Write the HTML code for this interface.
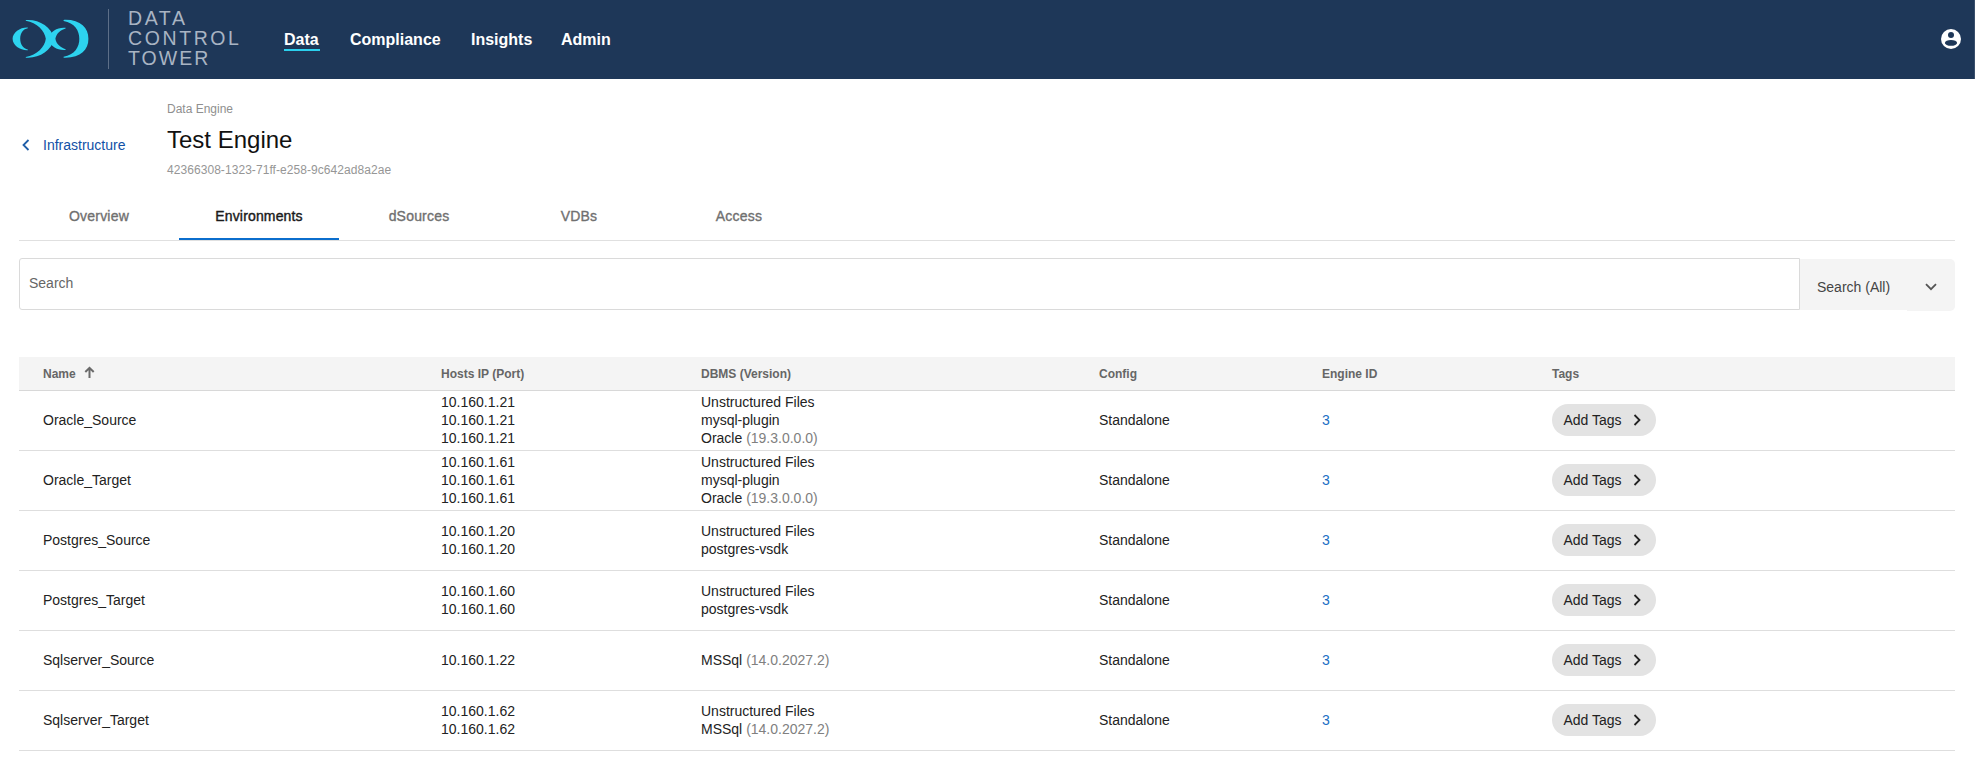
<!DOCTYPE html>
<html><head><meta charset="utf-8">
<style>
*{margin:0;padding:0;box-sizing:border-box}
html,body{width:1975px;height:764px;overflow:hidden;background:#fff;font-family:"Liberation Sans",sans-serif;color:#222}
.abs{position:absolute;white-space:nowrap}
#hdr{position:absolute;left:0;top:0;width:1975px;height:79px;background:#1e3758}
#logo{position:absolute;left:0;top:0}
#divl{position:absolute;left:108px;top:9px;width:1px;height:60px;background:#5d6f88}
.brand{position:absolute;left:128px;font-size:19.5px;letter-spacing:2.6px;color:#a9b4c3;line-height:20px}
.nav{position:absolute;top:30px;font-size:16px;font-weight:bold;color:#fff;line-height:20px}
#navul{position:absolute;left:284px;top:49px;width:36px;height:2px;background:#2bd0ee}
#user{position:absolute;left:1941px;top:29px}
.crumb{position:absolute;left:167px;top:102px;font-size:12px;color:#8f8f8f}
.title{position:absolute;left:167px;top:126px;font-size:24px;color:#111}
.uid{position:absolute;left:167px;top:163px;font-size:12px;color:#969696;letter-spacing:0.06px}
.back{position:absolute;left:43px;top:137px;font-size:14px;color:#1150a6}
.tab{position:absolute;top:208px;width:160px;text-align:center;font-size:14px;color:#707070;-webkit-text-stroke:0.35px #707070;letter-spacing:0.2px}
.tab.act{color:#1a1a1a;-webkit-text-stroke:0.4px #1a1a1a;letter-spacing:0.15px}
#tabline{position:absolute;left:19px;top:240px;width:1936px;height:1px;background:#e0e0e0}
#tabul{position:absolute;left:179px;top:238px;width:160px;height:2px;background:#0b6ecd}
#search{position:absolute;left:19px;top:258px;width:1781px;height:52px;border:1px solid #dadada;border-radius:3px 0 0 3px}
#search span{position:absolute;left:9px;top:16px;font-size:14px;color:#666}
#dd{position:absolute;left:1800px;top:259px;width:155px;height:51px;background:#f4f4f4;border-radius:0 5px 5px 0}
#dd span{position:absolute;left:17px;top:19.5px;font-size:14px;color:#444}
#thead{position:absolute;left:19px;top:357px;width:1936px;height:34px;background:#f4f4f4;border-bottom:1px solid #d8d8d8}
.th{position:absolute;top:367px;font-size:12px;font-weight:bold;color:#666}
.row{position:absolute;left:19px;width:1936px;height:60px;border-bottom:1px solid #dedede}
.td{position:absolute;top:-1px;height:59px;display:flex;align-items:center;font-size:14px;color:#222;line-height:18px}
.gr{color:#808080}
.eid{color:#1a6fc4}
.btn{position:absolute;left:1533px;width:104px;height:32px;border-radius:16px;background:#e3e3e3}
.btn span{position:absolute;left:11.5px;top:8px;font-size:14px;color:#222}
.btn svg{position:absolute;left:81px;top:9.5px}
</style></head><body>
<div id="hdr">
  <svg id="logo" width="100" height="79" viewBox="0 0 100 79">
    <g fill="#2dd3ef">
      <path d="M27.8,27.4 C20.5,27.0 12.6,32.0 12.6,38.85 C12.6,45.7 20.5,50.7 27.8,50.3 L27.8,49.4 C23.5,48.7 20.2,44.7 20.2,38.85 C20.2,33 23.5,29.0 27.8,28.3 Z"/>
      <path d="M25.8,20.0 C39,19.0 51,26.5 54.5,38.85 C51,51.2 39,58.7 25.8,57.7 L25.8,57.0 C37.0,55.4 45.0,46.7 45.8,38.85 C45.0,31.0 37.0,22.3 25.8,20.7 Z"/>
      <path d="M65.6,27.8 C57.5,27.2 51,30.5 48,38.85 C51,47.2 57.5,50.5 65.6,49.9 L65.6,49.2 C60.5,47.7 56.3,44.2 55.4,38.85 C56.3,33.5 60.5,30.0 65.6,28.5 Z"/>
      <path d="M63.6,19.9 C80,19.2 88.6,27.5 88.4,38.85 C88.6,50.2 80,58.5 63.6,57.8 L63.6,56.8 C74.5,54.9 79.5,47.2 79.3,38.85 C79.5,30.5 74.5,22.8 63.6,20.9 Z"/>
    </g>
  </svg>
  <div id="divl"></div>
  <div style="position:absolute;left:1974px;top:0;width:1px;height:79px;background:#3a4f6c"></div>
  <div class="brand" style="top:8px">DATA</div>
  <div class="brand" style="top:28px">CONTROL</div>
  <div class="brand" style="top:48px;letter-spacing:2.05px">TOWER</div>
  <div class="nav" style="left:284px">Data</div>
  <div class="nav" style="left:350px">Compliance</div>
  <div class="nav" style="left:471px">Insights</div>
  <div class="nav" style="left:561px">Admin</div>
  <div id="navul"></div>
  <svg id="user" width="20" height="20" viewBox="0 0 20 20">
    <circle cx="10" cy="10" r="10" fill="#fff"/>
    <circle cx="10" cy="6.0" r="3.0" fill="#1e3758"/>
    <ellipse cx="10" cy="13.9" rx="6.1" ry="2.9" fill="#1e3758"/>
  </svg>
</div>

<div class="crumb">Data Engine</div>
<div class="title">Test Engine</div>
<div class="uid">42366308-1323-71ff-e258-9c642ad8a2ae</div>
<svg class="abs" style="left:21px;top:139px" width="10" height="12" viewBox="0 0 10 12"><path d="M7.5,1 L2.5,6 L7.5,11" fill="none" stroke="#1f5ea8" stroke-width="1.8"/></svg>
<div class="back">Infrastructure</div>

<div class="tab" style="left:19px">Overview</div>
<div class="tab act" style="left:179px">Environments</div>
<div class="tab" style="left:339px">dSources</div>
<div class="tab" style="left:499px">VDBs</div>
<div class="tab" style="left:659px">Access</div>
<div id="tabline"></div>
<div id="tabul"></div>

<div id="search"><span>Search</span></div>
<div id="dd2" style="position:absolute;left:1907px;top:300px;width:48px;height:11px;background:#f4f4f4;border-radius:0 0 5px 0"></div><div id="dd"><span>Search (All)</span>
  <svg style="position:absolute;left:125px;top:24px" width="12" height="8" viewBox="0 0 12 8"><path d="M1,1.2 L6,6.2 L11,1.2" fill="none" stroke="#555" stroke-width="1.8"/></svg>
</div>

<div id="thead"></div>
<div class="th" style="left:43px">Name</div>
<svg class="abs" style="left:83.5px;top:366px" width="11" height="13" viewBox="0 0 11 13"><path d="M5.5,12 V2.2 M1.3,6 L5.5,1.8 L9.7,6" fill="none" stroke="#6a6a6a" stroke-width="2"/></svg>
<div class="th" style="left:441px">Hosts IP (Port)</div>
<div class="th" style="left:701px">DBMS (Version)</div>
<div class="th" style="left:1099px">Config</div>
<div class="th" style="left:1322px">Engine ID</div>
<div class="th" style="left:1552px">Tags</div>

<div id="rows">
<div class="row" style="top:391px">
 <div class="td" style="left:24px"><div>Oracle_Source</div></div>
 <div class="td" style="left:422px"><div>10.160.1.21<br>10.160.1.21<br>10.160.1.21</div></div>
 <div class="td" style="left:682px"><div>Unstructured Files<br>mysql-plugin<br>Oracle <span class=gr>(19.3.0.0.0)</span></div></div>
 <div class="td" style="left:1080px"><div>Standalone</div></div>
 <div class="td eid" style="left:1303px"><div>3</div></div>
 <div class="btn" style="top:13px"><span>Add Tags</span><svg width="8" height="12" viewBox="0 0 8 12"><path d="M1.5,1 L6.5,6 L1.5,11" fill="none" stroke="#222" stroke-width="1.8"/></svg></div>
</div>
<div class="row" style="top:451px">
 <div class="td" style="left:24px"><div>Oracle_Target</div></div>
 <div class="td" style="left:422px"><div>10.160.1.61<br>10.160.1.61<br>10.160.1.61</div></div>
 <div class="td" style="left:682px"><div>Unstructured Files<br>mysql-plugin<br>Oracle <span class=gr>(19.3.0.0.0)</span></div></div>
 <div class="td" style="left:1080px"><div>Standalone</div></div>
 <div class="td eid" style="left:1303px"><div>3</div></div>
 <div class="btn" style="top:13px"><span>Add Tags</span><svg width="8" height="12" viewBox="0 0 8 12"><path d="M1.5,1 L6.5,6 L1.5,11" fill="none" stroke="#222" stroke-width="1.8"/></svg></div>
</div>
<div class="row" style="top:511px">
 <div class="td" style="left:24px"><div>Postgres_Source</div></div>
 <div class="td" style="left:422px"><div>10.160.1.20<br>10.160.1.20</div></div>
 <div class="td" style="left:682px"><div>Unstructured Files<br>postgres-vsdk</div></div>
 <div class="td" style="left:1080px"><div>Standalone</div></div>
 <div class="td eid" style="left:1303px"><div>3</div></div>
 <div class="btn" style="top:13px"><span>Add Tags</span><svg width="8" height="12" viewBox="0 0 8 12"><path d="M1.5,1 L6.5,6 L1.5,11" fill="none" stroke="#222" stroke-width="1.8"/></svg></div>
</div>
<div class="row" style="top:571px">
 <div class="td" style="left:24px"><div>Postgres_Target</div></div>
 <div class="td" style="left:422px"><div>10.160.1.60<br>10.160.1.60</div></div>
 <div class="td" style="left:682px"><div>Unstructured Files<br>postgres-vsdk</div></div>
 <div class="td" style="left:1080px"><div>Standalone</div></div>
 <div class="td eid" style="left:1303px"><div>3</div></div>
 <div class="btn" style="top:13px"><span>Add Tags</span><svg width="8" height="12" viewBox="0 0 8 12"><path d="M1.5,1 L6.5,6 L1.5,11" fill="none" stroke="#222" stroke-width="1.8"/></svg></div>
</div>
<div class="row" style="top:631px">
 <div class="td" style="left:24px"><div>Sqlserver_Source</div></div>
 <div class="td" style="left:422px"><div>10.160.1.22</div></div>
 <div class="td" style="left:682px"><div>MSSql <span class=gr>(14.0.2027.2)</span></div></div>
 <div class="td" style="left:1080px"><div>Standalone</div></div>
 <div class="td eid" style="left:1303px"><div>3</div></div>
 <div class="btn" style="top:13px"><span>Add Tags</span><svg width="8" height="12" viewBox="0 0 8 12"><path d="M1.5,1 L6.5,6 L1.5,11" fill="none" stroke="#222" stroke-width="1.8"/></svg></div>
</div>
<div class="row" style="top:691px">
 <div class="td" style="left:24px"><div>Sqlserver_Target</div></div>
 <div class="td" style="left:422px"><div>10.160.1.62<br>10.160.1.62</div></div>
 <div class="td" style="left:682px"><div>Unstructured Files<br>MSSql <span class=gr>(14.0.2027.2)</span></div></div>
 <div class="td" style="left:1080px"><div>Standalone</div></div>
 <div class="td eid" style="left:1303px"><div>3</div></div>
 <div class="btn" style="top:13px"><span>Add Tags</span><svg width="8" height="12" viewBox="0 0 8 12"><path d="M1.5,1 L6.5,6 L1.5,11" fill="none" stroke="#222" stroke-width="1.8"/></svg></div>
</div>
</div>
</body></html>
